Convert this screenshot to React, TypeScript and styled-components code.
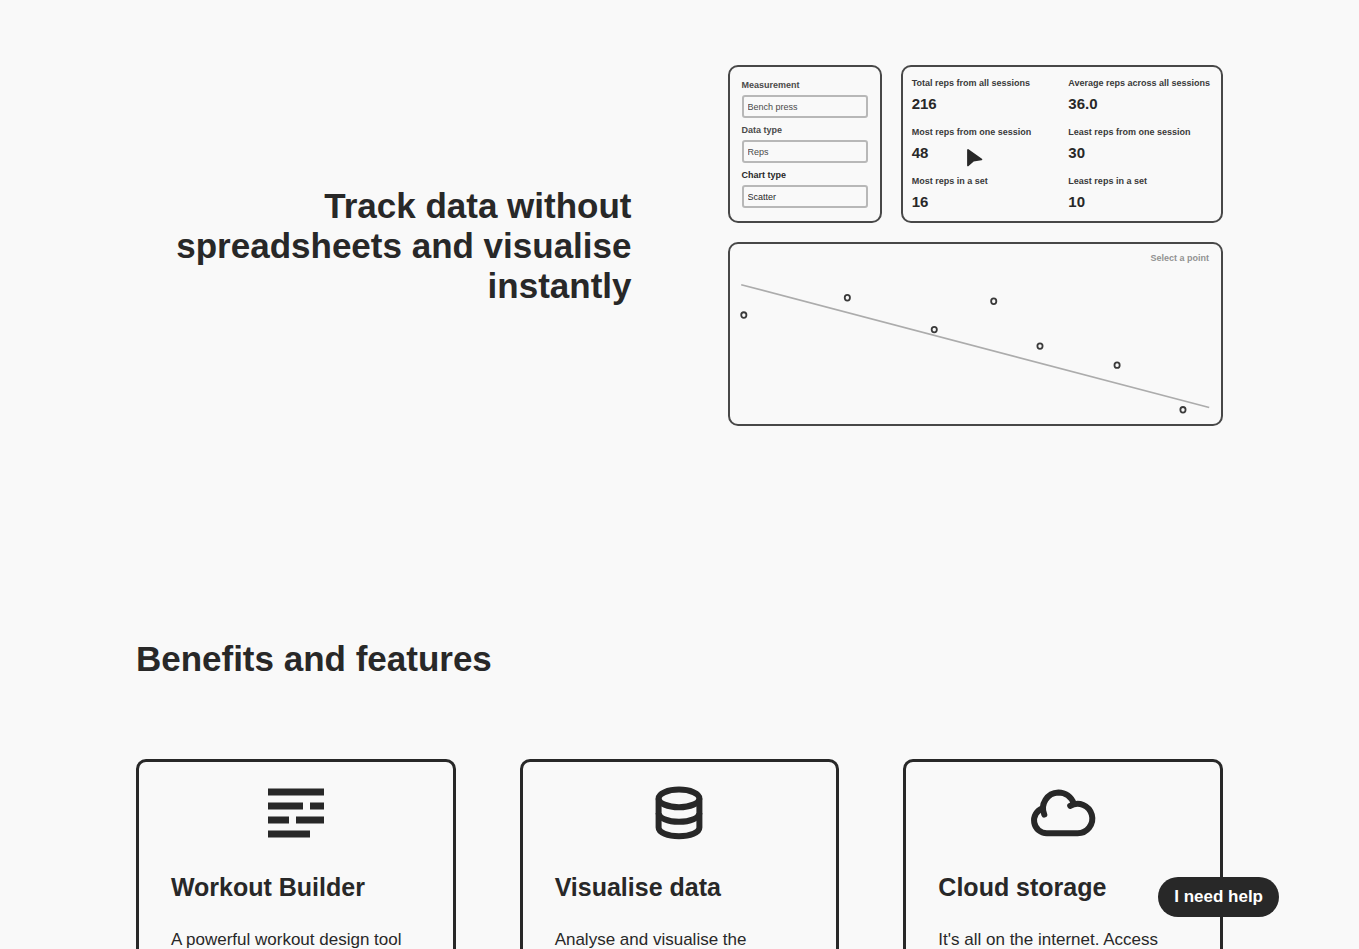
import React from "react";
import styled, { createGlobalStyle } from "styled-components";

const ink = "#282828";
const paper = "#f9f9f9";

const GlobalStyle = createGlobalStyle`
  *, *::before, *::after { box-sizing: border-box; }
  body {
    margin: 0;
    background: ${paper};
    color: ${ink};
    font-family: "Liberation Sans", Arial, sans-serif;
    font-size: 17px;
    line-height: 24px;
  }
  h2, h3, p, dl, dt, dd { margin: 0; }
`;

const Page = styled.main`
  padding: 65px 10% 80px;
`;

const Hero = styled.section`
  display: grid;
  grid-template-columns: 1fr 1fr;
  gap: 96px;
  align-items: center;
  margin-bottom: 213px;
`;

const Title = styled.h2<{ $align?: string }>`
  font-size: 35px;
  line-height: 40px;
  font-weight: 700;
  text-align: ${(p) => p.$align ?? "left"};
`;

const Dashboard = styled.div`
  display: grid;
  grid-template-columns: 154fr 322fr;
  gap: 19px;
  font-size: 9px;
  line-height: 12px;
`;

const Panel = styled.div`
  border: 2px solid #484848;
  border-radius: 10px;
`;

const FormPanel = styled(Panel)`
  display: flex;
  flex-direction: column;
  gap: 6px;
  padding: 12px;
`;

const Field = styled.label<{ $soft?: boolean }>`
  display: flex;
  flex-direction: column;
  gap: 4px;
  font-weight: 700;
  color: ${(p) => (p.$soft ? "#4a4a4a" : ink)};
`;

const Select = styled.select`
  appearance: none;
  width: 100%;
  height: 23px;
  padding: 0 4px;
  border: 2px solid #b8b8b8;
  border-radius: 3px;
  background: transparent;
  color: inherit;
  font-family: inherit;
  font-size: 9px;
`;

const StatsPanel = styled(Panel)`
  position: relative;
  padding: 10px 11px 10px 9px;
`;

const Stats = styled.dl`
  display: grid;
  grid-template-columns: 1fr auto;
  gap: 13px 0;
`;

const StatLabel = styled.dt`
  font-weight: 700;
  color: #3a3a3a;
`;

const StatValue = styled.dd`
  margin-top: 6px;
  font-size: 15px;
  line-height: 18px;
  font-weight: 700;
`;

const Pointer = styled.svg`
  position: absolute;
  left: 20%;
  top: 81px;
`;

const ChartPanel = styled(Panel)`
  grid-column: 1 / -1;
  padding: 8px 12px 0;
`;

const ChartHint = styled.p`
  text-align: right;
  font-weight: 700;
  color: #929292;
`;

const Plot = styled.svg`
  display: block;
  width: 100%;
  height: auto;
  overflow: visible;
`;

const Cards = styled.div`
  display: grid;
  grid-template-columns: repeat(3, 1fr);
  gap: 64px;
  margin-top: 80px;
`;

const Card = styled.article`
  display: flex;
  flex-direction: column;
  min-height: 320px;
  padding: 9px 32px 32px;
  border: 3px solid ${ink};
  border-radius: 10px;
`;

const CardIcon = styled.svg`
  align-self: center;
  width: 84px;
  height: 84px;
`;

const CardTitle = styled.h3`
  margin: 16px 0 25px;
  font-size: 25px;
  line-height: 32px;
  font-weight: 700;
`;

const HelpButton = styled.button`
  position: fixed;
  right: 80px;
  bottom: 32px;
  height: 40px;
  padding: 0 16px;
  border: 0;
  border-radius: 20px;
  background: ${ink};
  color: #ffffff;
  font-family: inherit;
  font-size: 17px;
  font-weight: 700;
  cursor: pointer;
`;

const fields = [
  { label: "Measurement", value: "Bench press", soft: true },
  { label: "Data type", value: "Reps", soft: true },
  { label: "Chart type", value: "Scatter", soft: false },
];

const stats = [
  ["Total reps from all sessions", "216"],
  ["Average reps across all sessions", "36.0"],
  ["Most reps from one session", "48"],
  ["Least reps from one session", "30"],
  ["Most reps in a set", "16"],
  ["Least reps in a set", "10"],
];

const points = [
  [1.8, 51],
  [105.2, 33.7],
  [192, 65.5],
  [251.4, 37.2],
  [297.6, 82],
  [374.6, 101],
  [440.4, 145.6],
];

const BuilderIcon = () => (
  <CardIcon viewBox="0 0 24 24" fill={ink} aria-hidden="true">
    <path d="M4 5h16v2H4zM4 9h10v2H4zM16 9h4v2h-4zM4 13h6v2H4zM12 13h8v2h-8zM4 17h12v2H4z" />
  </CardIcon>
);

const DataIcon = () => (
  <CardIcon viewBox="0 0 84 84" fill="none" stroke={ink} strokeWidth="6" aria-hidden="true">
    <ellipse cx="42" cy="27.4" rx="20.4" ry="8.8" />
    <path d="M21.6 27.4V56.6C21.6 61.5 30.7 65.3 42 65.3S62.4 61.5 62.4 56.6V27.4" />
    <path d="M21.6 41.9C21.6 46.8 30.7 50.8 42 50.8S62.4 46.8 62.4 41.9" />
  </CardIcon>
);

const CloudIcon = () => (
  <CardIcon
    viewBox="0 0 84 84"
    fill="none"
    stroke={ink}
    strokeWidth="6"
    strokeLinecap="round"
    aria-hidden="true"
  >
    <path d="M23.3 43.6A15.9 15.9 0 0 1 37.4 21.4A15.9 15.9 0 0 1 52.6 32.4" />
    <path d="M49.2 34.8A14.7 14.7 0 1 1 56.4 62.2H25.8A12.8 12.8 0 0 1 21.4 37.4" />
  </CardIcon>
);

const features = [
  { Icon: BuilderIcon, title: "Workout Builder", text: "A powerful workout design tool" },
  { Icon: DataIcon, title: "Visualise data", text: "Analyse and visualise the" },
  { Icon: CloudIcon, title: "Cloud storage", text: "It's all on the internet. Access" },
];

export default function App() {
  return (
    <>
      <GlobalStyle />
      <Page>
        <Hero>
          <Title $align="right">Track data without spreadsheets and visualise instantly</Title>
          <Dashboard>
            <FormPanel>
              {fields.map((f) => (
                <Field key={f.label} $soft={f.soft}>
                  {f.label}
                  <Select defaultValue={f.value}>
                    <option>{f.value}</option>
                  </Select>
                </Field>
              ))}
            </FormPanel>
            <StatsPanel>
              <Stats>
                {stats.map(([label, value]) => (
                  <div key={label}>
                    <StatLabel>{label}</StatLabel>
                    <StatValue>{value}</StatValue>
                  </div>
                ))}
              </Stats>
              <Pointer width="18" height="20" viewBox="0 0 18 20" aria-hidden="true">
                <path
                  d="M2 2V17.4L7.4 12.6L15.4 11.4Z"
                  fill={ink}
                  stroke={ink}
                  strokeWidth="1.8"
                  strokeLinejoin="round"
                />
              </Pointer>
            </StatsPanel>
            <ChartPanel>
              <ChartHint>Select a point</ChartHint>
              <Plot viewBox="0 0 467 160" role="img" aria-label="Reps over time">
                <line x1="-0.8" y1="20.7" x2="466.6" y2="143.3" stroke="#acacac" strokeWidth="1.7" />
                {points.map(([x, y]) => (
                  <ellipse
                    key={x}
                    cx={x}
                    cy={y}
                    rx="2.6"
                    ry="2.8"
                    fill={paper}
                    stroke="#3a3a3a"
                    strokeWidth="1.8"
                  />
                ))}
              </Plot>
            </ChartPanel>
          </Dashboard>
        </Hero>
        <section>
          <Title>Benefits and features</Title>
          <Cards>
            {features.map(({ Icon, title, text }) => (
              <Card key={title}>
                <Icon />
                <CardTitle>{title}</CardTitle>
                <p>{text}</p>
              </Card>
            ))}
          </Cards>
        </section>
      </Page>
      <HelpButton type="button">I need help</HelpButton>
    </>
  );
}
